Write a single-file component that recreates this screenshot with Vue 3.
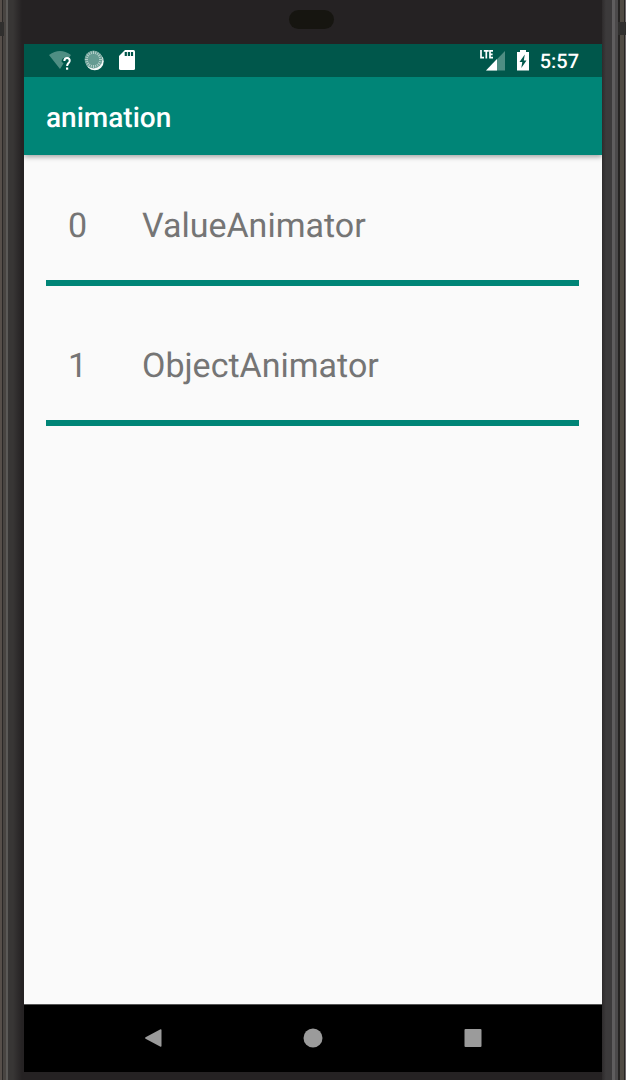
<script setup>
const items = ['ValueAnimator', 'ObjectAnimator']
const ticks = Array.from({ length: 20 }, (_, i) => i * 18)
</script>

<template>
  <div class="device">
    <div class="bezel"><span class="speaker"></span></div>
    <div class="screen">
      <div class="status">
        <div class="group left">
          <svg class="icon" width="24" height="22" viewBox="0 0 24 22" aria-label="Wi-Fi">
            <path d="M1 5Q12 -3 23 5L20.500 8.500Q14 6 13.500 11.500L15.500 13.500L12 19Z" fill="#4f8e83" />
            <path d="M16.300 11C16.500 7 22 7 21.700 11C21.500 13 19.100 13.300 19.100 16" fill="none" stroke="#fff" stroke-width="2" />
            <rect x="18" y="17.500" width="2.200" height="2.200" fill="#fff" />
          </svg>
          <svg class="icon" width="20" height="22" viewBox="0 0 20 22" aria-label="Sync">
            <circle cx="10.700" cy="11.300" r="9" fill="#f4f8f7" />
            <circle cx="9.500" cy="9.500" r="9" fill="#659b92" />
            <path v-for="a in ticks" :key="a" d="M9.500 1V4" :transform="`rotate(${a} 9.500 9.500)`" stroke="#b4cfca" stroke-width="1" />
            <circle cx="9.500" cy="9.500" r="5.500" fill="#659b92" />
          </svg>
          <svg class="icon" width="18" height="22" viewBox="0 0 18 22" aria-label="SD card">
            <path d="M7 0H15.500Q17 0 17 1.500V18.500Q17 20 15.500 20H2.500Q1 20 1 18.500V6Z" fill="#fff" />
            <path d="M7.800 2V6M10.900 2V6M14 2V6" stroke="#00574b" stroke-width="2.200" />
          </svg>
        </div>
        <div class="group right">
          <svg class="icon" width="26" height="22" viewBox="0 0 26 22" aria-label="LTE signal">
            <path d="M25 1V20.500H6Z" fill="#4f8e83" />
            <path d="M0 0H14V9.500H0Z" fill="#00574b" />
            <path d="M17 9V20.500H6Z" fill="#fff" />
            <path d="M1 0V7.700H4M3.800 .9H8.800M6.300 .9V8.500M13 .9H10V7.700H13M10 4.300H12.600" fill="none" stroke="#fff" stroke-width="1.700" />
          </svg>
          <svg class="icon" width="14" height="22" viewBox="0 0 14 22" aria-label="Battery charging">
            <path d="M4 0H10V2H13V20.500H1V2H4Z" fill="#fff" />
            <path d="M8.800 4.500L3.500 12H6.300L5.300 18L10.500 10.500H7.800Z" fill="#00574b" />
          </svg>
          <time>5:57</time>
        </div>
      </div>
      <header class="appbar"><h1>animation</h1></header>
      <ul class="list">
        <li v-for="(name, i) in items" :key="name" class="row">
          <span class="index">{{ i }}</span>
          <span>{{ name }}</span>
        </li>
      </ul>
      <nav class="nav">
        <button aria-label="Back">
          <svg width="20" height="20" viewBox="0 0 20 20"><path d="M17.500 1.200Q18.500 1 18.500 2V18Q18.500 19 17.500 18.800L2.500 10.800Q1.500 10 2.500 9.200Z" fill="#9b9b9b" /></svg>
        </button>
        <button aria-label="Home">
          <svg width="20" height="20" viewBox="0 0 20 20"><circle cx="10" cy="10" r="9.500" fill="#9b9b9b" /></svg>
        </button>
        <button aria-label="Recent apps">
          <svg width="20" height="20" viewBox="0 0 20 20"><rect x="1.500" y="1" width="17" height="18" rx="1" fill="#9b9b9b" /></svg>
        </button>
      </nav>
    </div>
  </div>
</template>

<style>
body {
  margin: 0;
}
</style>

<style scoped>
.device {
  box-sizing: border-box;
  min-height: 100vh;
  padding: 0 24px 8px;
  display: flex;
  flex-direction: column;
  font-family: Roboto, "Liberation Sans", sans-serif;
  text-rendering: geometricPrecision;
  background:
    linear-gradient(#302f2e, #302f2e) 0 22px / 4px 14px no-repeat,
    linear-gradient(#302f2e, #302f2e) 100% 22px / 8px 13px no-repeat,
    linear-gradient(90deg, #574f4a 0 2px, #2b2827 2px 3px, #484441 3px 6px, #5b5957 6px 8px, #383635 8px 13px, #252223 22px) 0 0 / 24px 100% no-repeat,
    linear-gradient(270deg, #6c6769 0 1px, #272523 1px 2px, #504b43 2px 6px, #252322 6px 8px, #4b494a 8px 11px, #5f5d5e 11px 14px, #3c3a3b 14px 20px, #2e2b2c 24px) 100% 0 / 24px 100% no-repeat,
    #252223;
}
.bezel {
  height: 44px;
  padding-right: 4px;
  display: flex;
  justify-content: center;
  align-items: flex-start;
}
.speaker {
  width: 45px;
  height: 19px;
  margin-top: 10px;
  border-radius: 10px;
  background: #161510;
}
.screen {
  flex: 1;
  display: flex;
  flex-direction: column;
  background: #fafafa;
}
.status {
  height: 33px;
  padding: 0 23px 0 24px;
  display: flex;
  align-items: center;
  justify-content: space-between;
  background: #00574b;
  color: #fff;
}
.group {
  display: flex;
  align-items: center;
}
.left {
  gap: 12px;
}
.left .icon:last-child {
  margin-left: 2px;
}
.right {
  gap: 10px;
}
.icon {
  display: block;
}
time {
  font-size: 20px;
  font-weight: 500;
  line-height: 24px;
}
.appbar {
  height: 78px;
  box-sizing: border-box;
  padding: 4px 22px 0;
  display: flex;
  align-items: center;
  background: #008577;
  box-shadow: 0 2px 5px rgba(0, 0, 0, 0.35);
  clip-path: inset(0 0 -10px 0);
}
h1 {
  margin: 0;
  font-size: 28px;
  font-weight: 500;
  line-height: 36px;
  color: #fff;
}
.list {
  flex: 1;
  margin: 0;
  padding: 0 23px 0 22px;
  list-style: none;
}
.row {
  display: flex;
  padding: 51px 22px 34px;
  border-bottom: 6px solid #008577;
  margin-bottom: 9px;
  font-size: 34px;
  line-height: 40px;
  color: #757575;
}
.index {
  width: 74px;
}
.nav {
  height: 68px;
  box-sizing: border-box;
  padding: 0 48px 2px;
  border-top: 1px solid #555;
  display: flex;
  align-items: center;
  justify-content: center;
  background: #000;
}
button {
  flex: 0 1 160px;
  height: 48px;
  padding: 0;
  border: 0;
  display: flex;
  align-items: center;
  justify-content: center;
  background: none;
}
</style>
